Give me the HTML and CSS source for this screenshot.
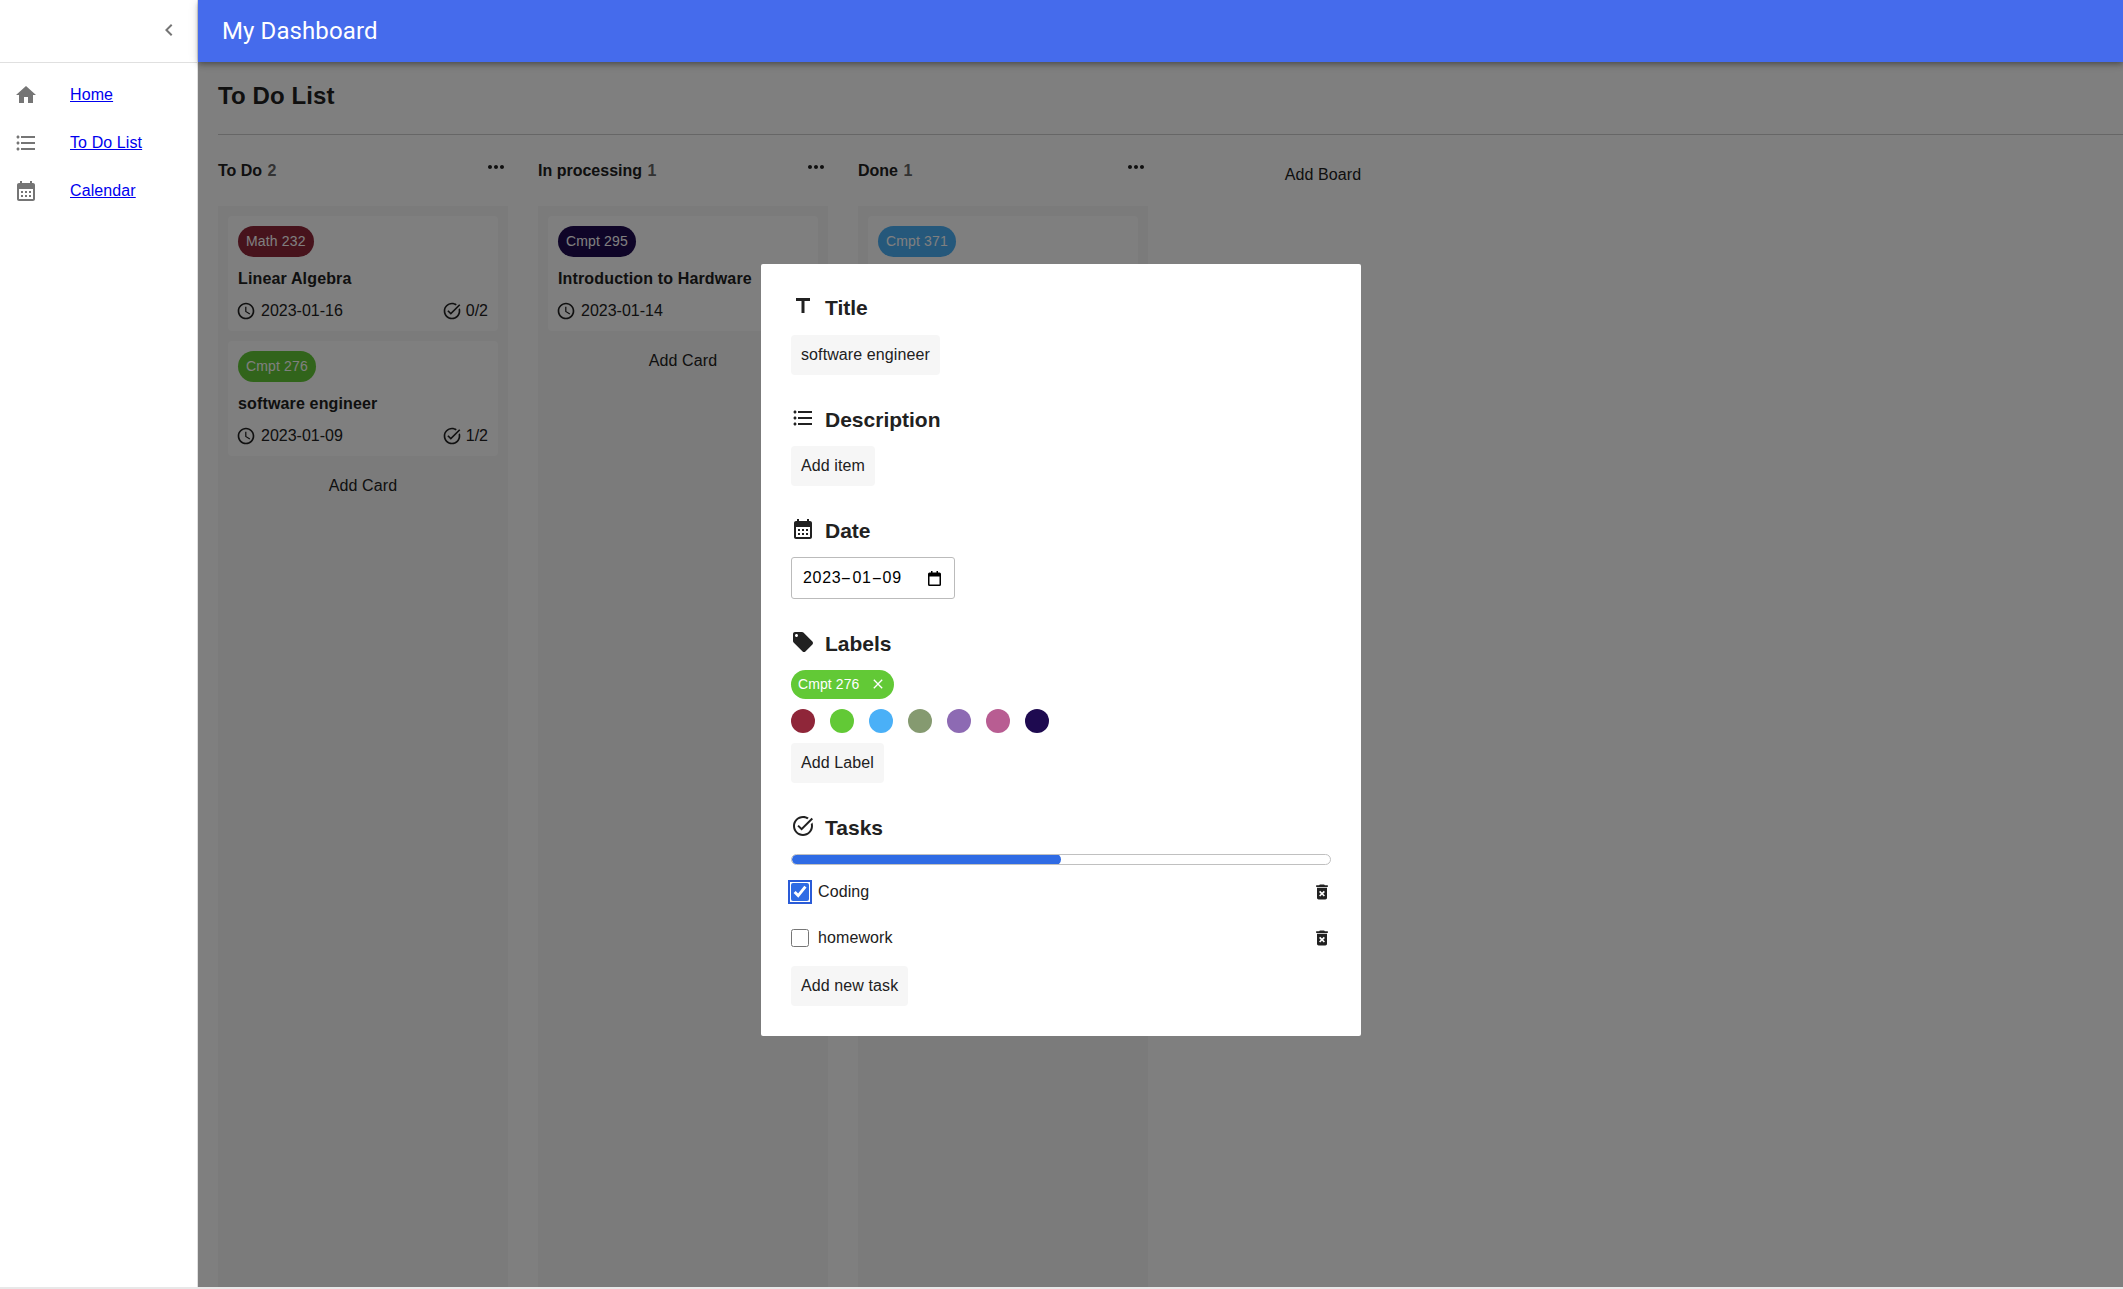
FILE: index.html
```html
<!DOCTYPE html>
<html lang="en">
<head>
    <meta charset="UTF-8">
    <title>My Dashboard</title>
    <link rel="stylesheet" href="styles.css">
</head>
<body>
    <svg class="sprite" xmlns="http://www.w3.org/2000/svg">
        <symbol id="i-chevron" viewBox="0 0 24 24"><path d="M15.41 7.41 14 6l-6 6 6 6 1.41-1.41L10.83 12z"/></symbol>
        <symbol id="i-home" viewBox="0 0 24 24"><path d="M10 20v-6h4v6h5v-8h3L12 3 2 12h3v8z"/></symbol>
        <symbol id="i-list" viewBox="0 0 24 24"><path d="M4 10.5c-.83 0-1.5.67-1.5 1.5s.67 1.5 1.5 1.5 1.5-.67 1.5-1.5-.67-1.5-1.5-1.5zm0-6c-.83 0-1.5.67-1.5 1.5S3.17 7.5 4 7.5 5.5 6.83 5.5 6 4.83 4.5 4 4.5zm0 12c-.83 0-1.5.68-1.5 1.5s.68 1.5 1.5 1.5 1.5-.68 1.5-1.5-.67-1.5-1.5-1.5zM7 19h14v-2H7v2zm0-6h14v-2H7v2zm0-8v2h14V5H7z"/></symbol>
        <symbol id="i-calendar" viewBox="0 0 24 24"><path d="M19 4h-1V2h-2v2H8V2H6v2H5c-1.11 0-1.99.9-1.99 2L3 20c0 1.1.89 2 2 2h14c1.1 0 2-.9 2-2V6c0-1.1-.9-2-2-2zm0 16H5V10h14v10zM9 14H7v-2h2v2zm4 0h-2v-2h2v2zm4 0h-2v-2h2v2zm-8 4H7v-2h2v2zm4 0h-2v-2h2v2zm4 0h-2v-2h2v2z"/></symbol>
        <symbol id="i-more" viewBox="0 0 24 24"><path d="M6 10c-1.1 0-2 .9-2 2s.9 2 2 2 2-.9 2-2-.9-2-2-2zm12 0c-1.1 0-2 .9-2 2s.9 2 2 2 2-.9 2-2-.9-2-2-2zm-6 0c-1.1 0-2 .9-2 2s.9 2 2 2 2-.9 2-2-.9-2-2-2z"/></symbol>
        <symbol id="i-clock" viewBox="0 0 24 24"><path d="M11.99 2C6.47 2 2 6.48 2 12s4.47 10 9.99 10C17.52 22 22 17.52 22 12S17.52 2 11.99 2zM12 20c-4.42 0-8-3.58-8-8s3.58-8 8-8 8 3.58 8 8-3.58 8-8 8zm.5-13H11v6l5.25 3.15.75-1.23-4.5-2.67z"/></symbol>
        <symbol id="i-task" viewBox="0 0 24 24"><path d="M22 5.18 10.59 16.6l-4.24-4.24 1.41-1.41 2.83 2.83 10-10L22 5.18zm-2.21 5.04c.13.57.21 1.17.21 1.78 0 4.42-3.58 8-8 8s-8-3.58-8-8 3.58-8 8-8c1.58 0 3.04.46 4.28 1.25l1.44-1.44C16.1 2.67 14.13 2 12 2 6.48 2 2 6.48 2 12s4.48 10 10 10 10-4.48 10-10c0-1.19-.22-2.33-.6-3.39l-1.61 1.61z"/></symbol>
        <symbol id="i-title" viewBox="0 0 24 24"><path d="M5 4v3h5.5v12h3V7H19V4z"/></symbol>
        <symbol id="i-tag" viewBox="0 0 24 24"><path d="M21.41 11.58l-9-9C12.05 2.22 11.55 2 11 2H4c-1.1 0-2 .9-2 2v7c0 .55.22 1.05.59 1.42l9 9c.36.36.86.58 1.41.58.55 0 1.05-.22 1.41-.59l7-7c.37-.36.59-.86.59-1.41 0-.55-.23-1.06-.59-1.42zM5.5 7C4.67 7 4 6.33 4 5.5S4.67 4 5.5 4 7 4.67 7 5.5 6.33 7 5.5 7z"/></symbol>
        <symbol id="i-close" viewBox="0 0 24 24"><path d="M19 6.41 17.59 5 12 10.59 6.41 5 5 6.41 10.59 12 5 17.59 6.41 19 12 13.41 17.59 19 19 17.59 13.41 12z"/></symbol>
        <symbol id="i-delete" viewBox="0 0 24 24"><path d="M6 19c0 1.1.9 2 2 2h8c1.1 0 2-.9 2-2V7H6v12zm2.46-7.12 1.41-1.41L12 12.59l2.12-2.12 1.41 1.41L13.41 14l2.12 2.12-1.41 1.41L12 15.41l-2.12 2.12-1.41-1.41L10.59 14l-2.13-2.12zM15.5 4l-1-1h-5l-1 1H5v2h14V4z"/></symbol>
        <symbol id="i-picker" viewBox="0 0 13 15"><path fill-rule="evenodd" d="M3 0h1.5v1.5h4V0H10v1.5h1.5A1.5 1.5 0 0 1 13 3v10.5a1.5 1.5 0 0 1-1.5 1.5h-10A1.5 1.5 0 0 1 0 13.5V3a1.5 1.5 0 0 1 1.5-1.5H3zM1.5 5.5v8h10v-8z"/></symbol>
    </svg>

    <div class="app">
        <aside class="sidebar">
            <div class="sidebar-top">
                <svg class="icon icon-grey"><use href="#i-chevron"/></svg>
            </div>
            <nav class="nav">
                <div class="nav-item">
                    <svg class="icon icon-grey"><use href="#i-home"/></svg>
                    <a href="#">Home</a>
                </div>
                <div class="nav-item">
                    <svg class="icon icon-grey"><use href="#i-list"/></svg>
                    <a href="#">To Do List</a>
                </div>
                <div class="nav-item">
                    <svg class="icon icon-grey"><use href="#i-calendar"/></svg>
                    <a href="#">Calendar</a>
                </div>
            </nav>
        </aside>

        <div class="main">
            <header class="topbar">My Dashboard</header>
            <section class="content">
                <h1 class="page-title">To Do List</h1>
                <hr class="divider">
                <div class="boards">
                    <div class="board">
                        <div class="board-head">
                            <span class="board-name">To Do <span class="board-count">2</span></span>
                            <svg class="icon"><use href="#i-more"/></svg>
                        </div>
                        <div class="board-body">
                            <div class="card">
                                <span class="tag tag-red">Math 232</span>
                                <div class="card-title">Linear Algebra</div>
                                <div class="card-meta">
                                    <span class="meta meta-date"><svg class="icon-sm"><use href="#i-clock"/></svg>2023-01-16</span>
                                    <span class="meta"><svg class="icon-sm"><use href="#i-task"/></svg>0/2</span>
                                </div>
                            </div>
                            <div class="card">
                                <span class="tag tag-green">Cmpt 276</span>
                                <div class="card-title">software engineer</div>
                                <div class="card-meta">
                                    <span class="meta meta-date"><svg class="icon-sm"><use href="#i-clock"/></svg>2023-01-09</span>
                                    <span class="meta"><svg class="icon-sm"><use href="#i-task"/></svg>1/2</span>
                                </div>
                            </div>
                            <div class="add-card">Add Card</div>
                        </div>
                    </div>

                    <div class="board">
                        <div class="board-head">
                            <span class="board-name">In processing <span class="board-count">1</span></span>
                            <svg class="icon"><use href="#i-more"/></svg>
                        </div>
                        <div class="board-body">
                            <div class="card">
                                <span class="tag tag-navy">Cmpt 295</span>
                                <div class="card-title">Introduction to Hardware</div>
                                <div class="card-meta">
                                    <span class="meta meta-date"><svg class="icon-sm"><use href="#i-clock"/></svg>2023-01-14</span>
                                </div>
                            </div>
                            <div class="add-card">Add Card</div>
                        </div>
                    </div>

                    <div class="board">
                        <div class="board-head">
                            <span class="board-name">Done <span class="board-count">1</span></span>
                            <svg class="icon"><use href="#i-more"/></svg>
                        </div>
                        <div class="board-body">
                            <div class="card">
                                <span class="tag tag-blue">Cmpt 371</span>
                            </div>
                        </div>
                    </div>

                    <div class="add-board">Add Board</div>
                </div>
            </section>
        </div>

        <div class="overlay">
            <div class="modal">
                <div class="section">
                    <h2 class="section-head"><svg class="icon"><use href="#i-title"/></svg>Title</h2>
                    <div class="soft-btn">software engineer</div>
                </div>
                <div class="section">
                    <h2 class="section-head"><svg class="icon"><use href="#i-list"/></svg>Description</h2>
                    <div class="soft-btn">Add item</div>
                </div>
                <div class="section">
                    <h2 class="section-head"><svg class="icon"><use href="#i-calendar"/></svg>Date</h2>
                    <div class="date-input">
                        <span class="date-text">2023<span class="date-dash">-</span>01<span class="date-dash">-</span>09</span>
                        <svg class="date-picker"><use href="#i-picker"/></svg>
                    </div>
                </div>
                <div class="section">
                    <h2 class="section-head"><svg class="icon"><use href="#i-tag"/></svg>Labels</h2>
                    <span class="chip">Cmpt 276<svg class="chip-x"><use href="#i-close"/></svg></span>
                    <div class="swatches">
                        <span class="swatch tag-red"></span>
                        <span class="swatch tag-green"></span>
                        <span class="swatch tag-blue"></span>
                        <span class="swatch swatch-olive"></span>
                        <span class="swatch swatch-purple"></span>
                        <span class="swatch swatch-pink"></span>
                        <span class="swatch tag-navy"></span>
                    </div>
                    <div class="soft-btn">Add Label</div>
                </div>
                <div class="section">
                    <h2 class="section-head"><svg class="icon"><use href="#i-task"/></svg>Tasks</h2>
                    <div class="progress"><div class="progress-fill" style="width: 50%"></div></div>
                    <div class="task">
                        <input class="task-check task-focus" type="checkbox" checked>
                        <span class="task-name">Coding</span>
                        <svg class="icon-md"><use href="#i-delete"/></svg>
                    </div>
                    <div class="task">
                        <input class="task-check" type="checkbox">
                        <span class="task-name">homework</span>
                        <svg class="icon-md"><use href="#i-delete"/></svg>
                    </div>
                    <div class="soft-btn add-task">Add new task</div>
                </div>
            </div>
        </div>
    </div>
</body>
</html>
```

FILE: styles.css
```css
* {
    box-sizing: border-box;
}
body {
    margin: 0;
    background: #e8e8e8;
    font-family: "Liberation Sans", Arial, sans-serif;
    font-size: 16px;
    letter-spacing: 0.1px;
    color: #212121;
}
.sprite {
    display: none;
}
.icon {
    width: 24px;
    height: 24px;
    flex-shrink: 0;
    fill: currentColor;
}
.icon-grey {
    fill: #757575;
}
.icon-sm {
    width: 20px;
    height: 20px;
    flex-shrink: 0;
    fill: currentColor;
}
.icon-md {
    width: 20px;
    height: 20px;
    margin-right: -1px;
    flex-shrink: 0;
    fill: #212121;
}

.app {
    position: relative;
    display: flex;
    height: 1287px;
    overflow: hidden;
    background: #fff;
}

/* sidebar sits above the dimmed area */
.sidebar {
    position: relative;
    z-index: 3;
    width: 198px;
    flex-shrink: 0;
    background: #fff;
    border-right: 1px solid #e0e0e0;
}
.sidebar-top {
    height: 63px;
    padding: 18px 16px 0 0;
    display: flex;
    justify-content: flex-end;
    align-items: flex-start;
    border-bottom: 1px solid #e0e0e0;
}
.nav {
    padding-top: 8px;
}
.nav-item {
    height: 48px;
    padding-left: 14px;
    display: flex;
    align-items: center;
    gap: 32px;
}
.nav-item a {
    color: #0000ee;
}

.main {
    flex: 1;
    min-width: 0;
    display: flex;
    flex-direction: column;
}
.topbar {
    position: relative;
    z-index: 3;
    height: 62px;
    flex-shrink: 0;
    padding: 0 24px 1px;
    display: flex;
    align-items: center;
    background: #456bec;
    color: #fff;
    font-family: Roboto, sans-serif;
    font-size: 24px;
    box-shadow: 0 2px 4px -1px rgba(0,0,0,.2), 0 4px 5px 0 rgba(0,0,0,.14), 0 1px 10px 0 rgba(0,0,0,.12);
}
.content {
    flex: 1;
    min-height: 0;
    padding: 20px 0 0 20px;
    display: flex;
    flex-direction: column;
}
.page-title {
    margin: 0;
    font-size: 24px;
    line-height: 28px;
}
.divider {
    margin: 24px 0 20px;
    width: 100%;
    border: none;
    border-top: 1px solid #ccc;
}

.boards {
    flex: 1;
    min-height: 0;
    display: flex;
    gap: 30px;
}
.board {
    width: 290px;
    flex-shrink: 0;
    display: flex;
    flex-direction: column;
}
.board-head {
    height: 51px;
    flex-shrink: 0;
    display: flex;
    justify-content: space-between;
    align-items: flex-start;
}
.board-name {
    font-weight: bold;
    line-height: 32px;
    letter-spacing: 0;
}
.board-count {
    margin-left: 1px;
    color: #666;
}
.board-body {
    flex: 1;
    padding: 10px;
    background: #f6f6f6;
}
.card {
    height: 115px;
    margin-bottom: 10px;
    padding: 10px;
    border-radius: 4px;
    background: #fefefe;
}
.tag {
    display: inline-block;
    height: 31px;
    padding: 0 8px;
    border-radius: 16px;
    color: #fff;
    font-size: 14px;
    line-height: 30px;
    letter-spacing: 0.15px;
}
.tag-red { background: #8f2639; }
.tag-green { background: #62c936; }
.tag-blue { background: #4ab0f7; }
.tag-navy { background: #1e0a50; }

.card-title {
    margin-top: 11px;
    font-weight: bold;
    line-height: 22px;
    letter-spacing: 0.15px;
}
.card-meta {
    margin-top: 11px;
    display: flex;
    justify-content: space-between;
    align-items: center;
    letter-spacing: 0;
}
.meta {
    display: flex;
    align-items: center;
    gap: 4px;
}
.meta-date {
    margin-left: -2px;
    gap: 5px;
}
.add-card {
    height: 40px;
    display: flex;
    justify-content: center;
    align-items: center;
}
.add-board {
    width: 290px;
    flex-shrink: 0;
    height: 40px;
    display: flex;
    justify-content: center;
    align-items: center;
}

.overlay {
    position: absolute;
    inset: 0;
    z-index: 2;
    background: rgba(0, 0, 0, 0.5);
}
.modal {
    position: absolute;
    left: 761px;
    top: 264px;
    width: 600px;
    height: 772px;
    padding: 30px;
    border-radius: 2px;
    background: #fff;
}
.section {
    margin-bottom: 31px;
}
.section-head {
    margin: 0 0 12.5px;
    display: flex;
    align-items: flex-start;
    gap: 10px;
    font-size: 21px;
    line-height: 28px;
    letter-spacing: 0;
}
.soft-btn {
    display: table;
    height: 40px;
    padding: 0 10px;
    border-radius: 4px;
    background: #f6f6f6;
    line-height: 40px;
}
.date-input {
    width: 164px;
    height: 42px;
    margin-top: -0.5px;
    padding: 0 13px 0 11px;
    display: flex;
    justify-content: space-between;
    align-items: center;
    border: 1px solid #bbb;
    border-radius: 3px;
    background: #fff;
    color: #000;
}
.date-text {
    letter-spacing: 0.7px;
}
.date-dash {
    display: inline-block;
    width: 11px;
    text-align: center;
    transform: scaleX(2);
}
.date-picker {
    width: 13px;
    height: 15px;
    fill: #000;
}
.chip {
    width: 103px;
    height: 29px;
    margin-top: -1px;
    padding-left: 7px;
    display: flex;
    align-items: center;
    border-radius: 15px;
    background: #62c936;
    color: #fff;
    font-size: 14px;
}
.chip-x {
    width: 16px;
    height: 16px;
    margin-left: 10px;
    fill: #fff;
}
.swatches {
    margin: 10px 0;
    display: flex;
    gap: 15px;
}
.swatch {
    width: 24px;
    height: 24px;
    border-radius: 50%;
}
.swatch-olive { background: #859a70; }
.swatch-purple { background: #8d6ab3; }
.swatch-pink { background: #b85d92; }

.progress {
    height: 11px;
    margin: -0.5px 0 4px;
    border: 1px solid #c0c0c0;
    border-radius: 6px;
    overflow: hidden;
    background: #fff;
}
.progress-fill {
    height: 11px;
    margin-top: -1px;
    border-radius: 6px;
    background: #2f6be4;
}
.task {
    height: 46px;
    display: flex;
    align-items: center;
    gap: 9px;
}
.task-check {
    width: 18px;
    height: 18px;
    margin: 0;
    accent-color: #2f6be4;
}
.task-focus {
    outline: 2px solid #2a5bd7;
    outline-offset: 1px;
}
.task-name {
    flex: 1;
}
.add-task {
    margin-top: 5px;
}
```
